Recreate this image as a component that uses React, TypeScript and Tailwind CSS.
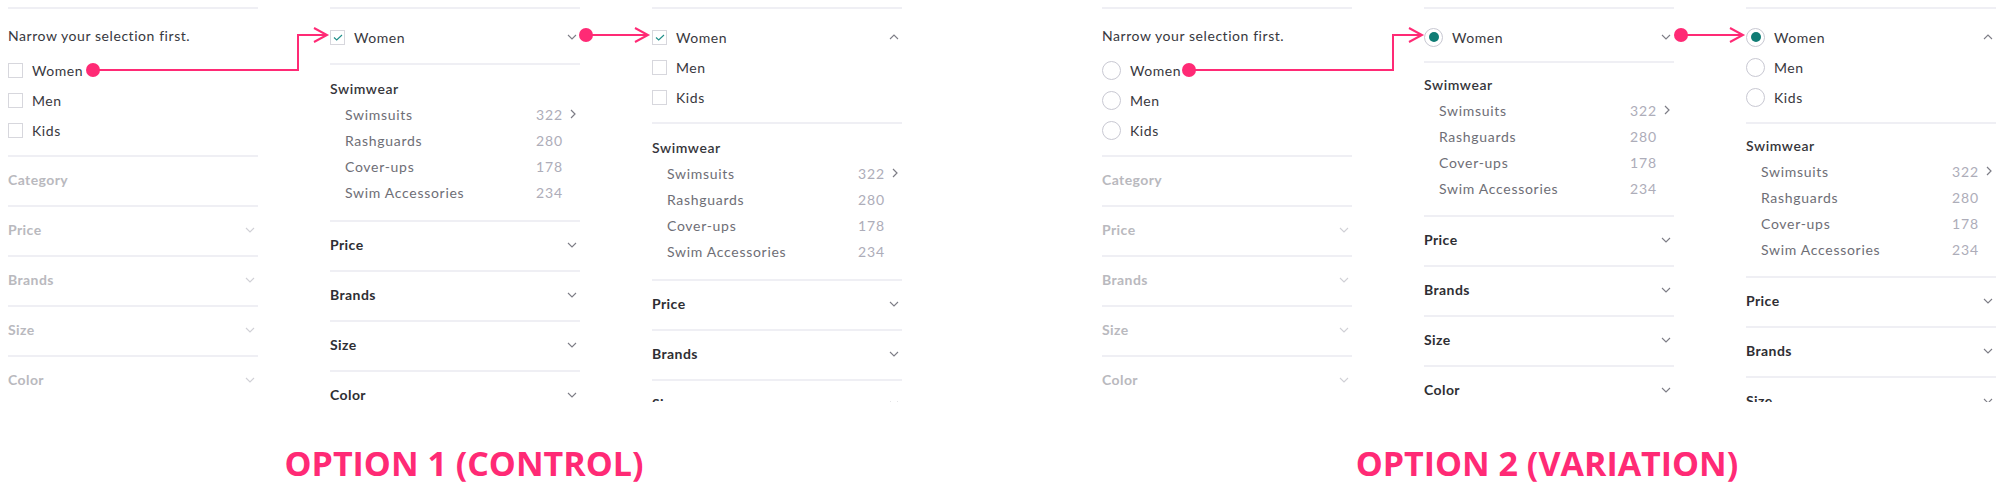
import React from 'react';

type Kind = 'check' | 'radio';

const GROUPS = ['Women', 'Men', 'Kids'];
const SWIM: [string, number][] = [
  ['Swimsuits', 322],
  ['Rashguards', 280],
  ['Cover-ups', 178],
  ['Swim Accessories', 234],
];

function Chevron({ dir = 'down', light = false }: { dir?: 'down' | 'up' | 'right'; light?: boolean }) {
  const stroke = light ? '#d0d0d6' : '#7d7d86';
  if (dir === 'right') {
    return (
      <svg width="6" height="10" viewBox="0 0 6 10" className="block">
        <path d="M1 1l4 4-4 4" fill="none" stroke={stroke} strokeWidth="1.2" />
      </svg>
    );
  }
  return (
    <svg width="10" height="6" viewBox="0 0 10 6" className="block">
      <path
        d={dir === 'down' ? 'M1 1l4 4 4-4' : 'M1 5l4-4 4 4'}
        fill="none"
        stroke={stroke}
        strokeWidth="1.1"
      />
    </svg>
  );
}

/** Checkbox or radio, depending on the option */
function Mark({ kind, on = false }: { kind: Kind; on?: boolean }) {
  if (kind === 'radio') {
    return (
      <span className="flex h-[19px] w-[19px] shrink-0 items-center justify-center rounded-full border border-[#c8c8d2] bg-white">
        {on && <span className="h-[10px] w-[10px] rounded-full bg-[#0f7c74]" />}
      </span>
    );
  }
  return (
    <span className="flex h-[15px] w-[15px] shrink-0 items-center justify-center border border-[#d7d7dd] bg-white">
      {on && (
        <svg width="10" height="7" viewBox="0 0 10 7">
          <path d="M1 3.5l2.7 2.5L9 1" fill="none" stroke="#1f8f89" strokeWidth="1.1" />
        </svg>
      )}
    </span>
  );
}

function GroupRow({ kind, label, on = false, right }: { kind: Kind; label: string; on?: boolean; right?: React.ReactNode }) {
  return (
    <div className="flex h-[30px] items-center">
      <Mark kind={kind} on={on} />
      <span className={`${kind === 'radio' ? 'ml-[9px]' : 'ml-[9px]'} flex-1 text-[14px] tracking-[0.04em] text-[#38383e]`}>
        {label}
      </span>
      {right && <span className="pr-[3px]">{right}</span>}
    </div>
  );
}

function Section({ label, disabled = false, chevron = true }: { label: string; disabled?: boolean; chevron?: boolean }) {
  return (
    <div className="flex h-[50px] items-center justify-between border-t-2 border-[#efeff4] pb-[3px] pr-[3px]">
      <span className={`text-[14px] font-bold tracking-[0.03em] ${disabled ? 'text-[#b9b9be]' : 'text-[#2e2e33]'}`}>
        {label}
      </span>
      {chevron && <Chevron light={disabled} />}
    </div>
  );
}

function Swimwear({ tight = false }: { tight?: boolean }) {
  return (
    <div className={`border-t-2 border-[#efeff4] ${tight ? 'pt-[8px] pb-[14px]' : 'pt-[10px] pb-[15px]'}`}>
      <div className="flex h-[26px] items-center text-[14px] font-semibold tracking-[0.04em] text-[#36363b]">Swimwear</div>
      {SWIM.map(([name, count], i) => (
        <div key={name} className="flex h-[26px] items-center pl-[15px] text-[14px] tracking-[0.05em]">
          <span className="flex-1 text-[#6e6e76]">{name}</span>
          <span className="tracking-[0.06em] text-[#adadb9]">{count}</span>
          <span className="flex w-[17px] justify-end pr-[4px]">{i === 0 && <Chevron dir="right" />}</span>
        </div>
      ))}
    </div>
  );
}

function StepOne({ kind }: { kind: Kind }) {
  return (
    <div className="w-[250px] shrink-0 border-t-2 border-[#efeff4]">
      <div className="pt-[11px] pb-[10px]">
        <div className="flex h-[30px] items-center text-[14px] tracking-[0.04em] text-[#38383e]">
          Narrow your selection first.
        </div>
        <div className="mt-[5px]">
          {GROUPS.map((g) => (
            <GroupRow key={g} kind={kind} label={g} />
          ))}
        </div>
      </div>
      <Section label="Category" disabled chevron={false} />
      <Section label="Price" disabled />
      <Section label="Brands" disabled />
      <Section label="Size" disabled />
      <Section label="Color" disabled />
    </div>
  );
}

function StepTwo({ kind }: { kind: Kind }) {
  return (
    <div className="w-[250px] shrink-0 border-t-2 border-[#efeff4]">
      <div className={`pt-[13px] ${kind === 'radio' ? 'pb-[9px]' : 'pb-[11px]'}`}>
        <GroupRow kind={kind} label="Women" on right={<Chevron />} />
      </div>
      <Swimwear tight={kind === 'radio'} />
      <Section label="Price" />
      <Section label="Brands" />
      <Section label="Size" />
      <Section label="Color" />
    </div>
  );
}

function StepThree({ kind }: { kind: Kind }) {
  return (
    <div className="w-[250px] shrink-0 border-t-2 border-[#efeff4]">
      <div className="pt-[13px] pb-[10px]">
        <GroupRow kind={kind} label="Women" on right={<Chevron dir="up" />} />
        <GroupRow kind={kind} label="Men" />
        <GroupRow kind={kind} label="Kids" />
      </div>
      <Swimwear tight={kind === 'radio'} />
      <Section label="Price" />
      <Section label="Brands" />
      <Section label="Size" />
      <Section label="Color" />
    </div>
  );
}

function Option({ kind, title, shift }: { kind: Kind; title: string; shift: string }) {
  return (
    <div className="flex w-[894px] shrink-0 flex-col">
      <div className="flex h-[395px] gap-[72px] overflow-hidden">
        <StepOne kind={kind} />
        <StepTwo kind={kind} />
        <StepThree kind={kind} />
      </div>
      <div
        className={`mt-[44px] text-center font-['Open_Sans',sans-serif] text-[34px] font-bold leading-[35px] text-[#ff2a75] ${shift}`}
      >
        {title}
      </div>
    </div>
  );
}

/** Pink annotation arrows drawn over the panels */
function Arrows() {
  const pink = '#ff2a75';
  const head = (x: number, y: number) => `M${x - 13} ${y - 7}L${x} ${y}L${x - 13} ${y + 7}`;
  return (
    <svg className="pointer-events-none absolute left-0 top-0" width="2004" height="494" viewBox="0 0 2004 494">
      <g fill="none" stroke={pink} strokeWidth="2">
        <path d="M93 70H298V35H326" />
        <path d={head(327, 35)} />
        <path d="M586 35H647" />
        <path d={head(648, 35)} />
        <path d="M1189 70H1393V35H1421" />
        <path d={head(1422, 35)} />
        <path d="M1681 35H1742" />
        <path d={head(1743, 35)} />
      </g>
      <g fill={pink}>
        <circle cx="93" cy="70" r="7" />
        <circle cx="586" cy="35" r="7" />
        <circle cx="1189" cy="70" r="7" />
        <circle cx="1681" cy="35" r="7" />
      </g>
    </svg>
  );
}

export default function App() {
  return (
    <div className="relative h-[494px] w-[2004px] overflow-hidden bg-white font-['Lato',sans-serif]">
      <div className="flex gap-[200px] pl-[8px] pt-[7px]">
        <Option kind="check" title="OPTION 1 (CONTROL)" shift="pl-[18px]" />
        <Option kind="radio" title="OPTION 2 (VARIATION)" shift="pr-[4px]" />
      </div>
      <Arrows />
    </div>
  );
}
